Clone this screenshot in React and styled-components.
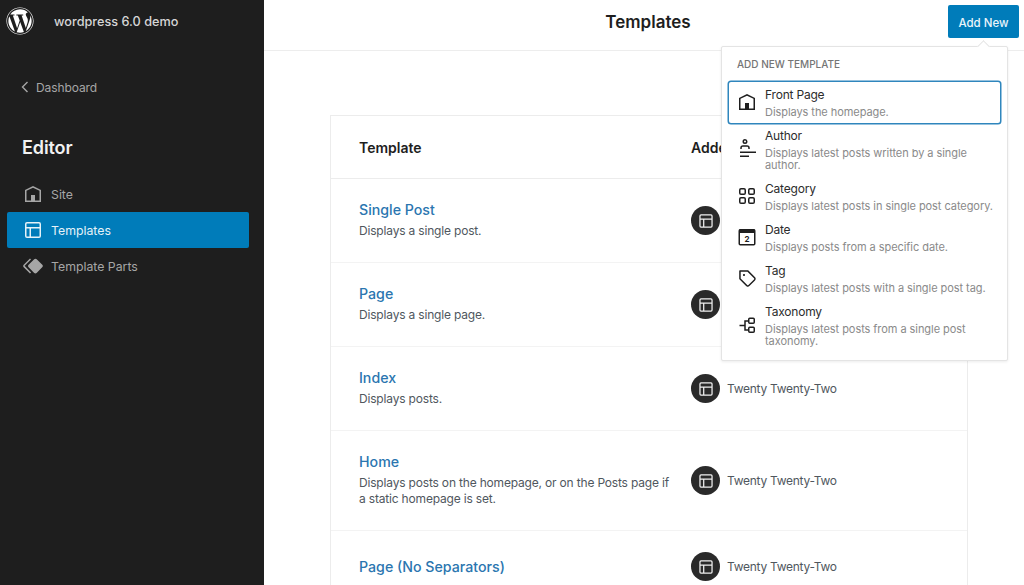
import React from "react";
import styled, { createGlobalStyle } from "styled-components";
import { FaWordpress } from "react-icons/fa";

const Global = createGlobalStyle`
  html, body { margin: 0; padding: 0; background: #fff; }
  body { font-family: Inter, "Liberation Sans", sans-serif; overflow: hidden; }
  #root { height: 585px; }
`;

const Shell = styled.div`
  display: flex;
  width: 1024px;
  height: 585px;
  overflow: hidden;
`;

const Sidebar = styled.aside`
  flex: 0 0 264px;
  background: #1e1e1e;
  display: flex;
  flex-direction: column;
`;

const SiteBar = styled.div`
  display: flex;
  align-items: center;
  gap: 20px;
  height: 42px;
  padding-left: 6px;
  color: #fff;
  font-size: 28px;
  line-height: 0;
`;

const SiteName = styled.span`
  font-size: 12.7px;
  line-height: 16px;
  font-weight: 500;
  margin-top: 2px;
  color: #d6d6d6;
`;

const BackLink = styled.div`
  display: flex;
  align-items: center;
  gap: 7px;
  height: 20px;
  margin: 35px 0 0 21px;
  font-size: 12px;
  letter-spacing: -0.1px;
  color: #a6a6a6;
`;

const SideTitle = styled.h2`
  margin: 39px 0 0 22px;
  height: 24px;
  font-size: 18px;
  line-height: 24px;
  font-weight: 600;
  letter-spacing: -0.1px;
  color: #f2f2f2;
`;

const Nav = styled.nav`
  display: flex;
  flex-direction: column;
  margin: 16px 15px 0 7px;
`;

const NavItem = styled.div`
  display: flex;
  align-items: center;
  gap: 6px;
  height: 36px;
  padding-left: 14px;
  border-radius: 2px;
  font-size: 12.3px;
  background: ${(p) => (p.$active ? "#007cba" : "transparent")};
  color: ${(p) => (p.$active ? "#e6f2f8" : "#a6a6a6")};
`;

const Main = styled.main`
  flex: 1;
  min-width: 0;
  display: flex;
  flex-direction: column;
  position: relative;
`;

const TopBar = styled.header`
  flex: 0 0 50px;
  box-sizing: content-box;
  display: flex;
  align-items: center;
  padding: 0 5px 0 84px;
  border-bottom: 1px solid #ededed;
`;

const PageTitle = styled.h1`
  flex: 1;
  margin: -6px 0 0;
  text-align: center;
  font-size: 17px;
  font-weight: 600;
  color: #1e1e1e;
`;

const PrimaryButton = styled.button`
  width: 71px;
  height: 33px;
  margin-top: -7px;
  padding: 2px 0 0;
  border: 0;
  border-radius: 2px;
  background: #007cba;
  color: #eaf4fa;
  font: 500 11.5px Inter, "Liberation Sans", sans-serif;
`;

const Table = styled.section`
  width: 638px;
  margin: 64px 0 0 66px;
  border: 1px solid #ececec;
  border-bottom: 0;
  box-sizing: border-box;
  flex: 1;
`;

const HeadRow = styled.div`
  display: grid;
  grid-template-columns: 332px 1fr;
  align-items: center;
  height: 63px;
  padding-left: 28px;
  border-bottom: 1px solid #ececec;
  font-size: 14px;
  font-weight: 600;
  color: #1e1e1e;
  box-sizing: border-box;
  white-space: nowrap;
  overflow: hidden;
`;

const Row = styled.div`
  display: grid;
  grid-template-columns: 312px 1fr;
  align-items: center;
  column-gap: 20px;
  padding: 21px 0 21px 28px;
  border-bottom: 1px solid #f3f3f3;
  box-sizing: border-box;
`;

const RowTitle = styled.div`
  font-size: 14.2px;
  line-height: 20px;
  font-weight: 500;
  color: #2b76b0;
`;

const RowDesc = styled.div`
  margin: 3px 0 2px;
  font-size: 12px;
  line-height: 16px;
  letter-spacing: -0.18px;
  color: #50575e;
`;

const Owner = styled.div`
  display: flex;
  align-items: center;
  gap: 7px;
  font-size: 12px;
  letter-spacing: -0.28px;
  color: #50575e;
`;

const Badge = styled.span`
  flex: 0 0 29px;
  width: 29px;
  height: 29px;
  border-radius: 50%;
  background: #2a2a2a;
  color: #f0f0f0;
  display: flex;
  align-items: center;
  justify-content: center;
`;

const Popover = styled.div`
  position: absolute;
  top: 46px;
  left: 457px;
  width: 287px;
  box-sizing: border-box;
  padding: 9px 7px 8px;
  background: #fff;
  border: 1px solid #e4e4e4;
  border-radius: 2px;
  box-shadow: 0 1px 3px rgba(0, 0, 0, 0.08);
  z-index: 2;

  &::before {
    content: "";
    position: absolute;
    top: -5px;
    right: 19px;
    width: 8px;
    height: 8px;
    background: #fff;
    border-top: 1px solid #e4e4e4;
    border-left: 1px solid #e4e4e4;
    transform: rotate(45deg);
  }
`;

const PopoverHeading = styled.div`
  height: 16px;
  margin: 0 0 10px 8px;
  font-size: 10px;
  line-height: 16px;
  font-weight: 500;
  text-transform: uppercase;
  color: #757575;
`;

const Option = styled.div`
  display: flex;
  align-items: center;
  gap: 6px;
  padding: 4px 4px 5px 6px;
  border-radius: 2px;
  color: #1e1e1e;
  ${(p) => p.$focused && "box-shadow: 0 0 0 1.5px #2f86bd;"}
`;

const OptionText = styled.div`
  flex: 1;
  min-width: 0;
`;

const OptionTitle = styled.div`
  font-size: 12px;
  line-height: 18px;
  letter-spacing: -0.2px;
  color: #2c2c2c;
`;

const OptionDesc = styled.div`
  margin-top: 2px;
  font-size: 11px;
  line-height: 12px;
  letter-spacing: -0.06px;
  color: #8a8a8a;
`;

const Icon = ({ size = 24, children }) => (
  <svg width={size} height={size} viewBox="0 0 24 24" fill="currentColor" style={{ flex: "none", display: "block" }}>
    {children}
  </svg>
);

const HomeIcon = () => (
  <Icon><path d="M12 4L4 7.9V20h16V7.9L12 4zm6.5 14.5H14V13h-4v5.5H5.5V8.8L12 5.7l6.5 3.1v9.7z" /></Icon>
);
const LayoutIcon = ({ size }) => (
  <Icon size={size}><path d="M18 5.5H6a.5.5 0 00-.5.5v3h13V6a.5.5 0 00-.5-.5zm.5 5H10v8h8a.5.5 0 00.5-.5v-7.5zm-10 0h-3V18a.5.5 0 00.5.5h2.5v-8zM6 4h12a2 2 0 012 2v12a2 2 0 01-2 2H6a2 2 0 01-2-2V6a2 2 0 012-2z" /></Icon>
);
const PartsIcon = () => (
  <Icon><path d="M21.3 10.8l-5.6-5.6c-.7-.7-1.8-.7-2.5 0l-5.6 5.6c-.7.7-.7 1.8 0 2.5l5.6 5.6c.3.3.8.5 1.2.5s.9-.2 1.2-.5l5.6-5.6c.8-.7.8-1.9.1-2.5zm-17.6 1L10 5.5l-1-1-6.3 6.3c-.7.7-.7 1.8 0 2.5L9 19.5l1.1-1.1-6.3-6.3c-.2 0-.2-.2-.1-.3z" /></Icon>
);
const AuthorIcon = () => (
  <Icon><path fillRule="evenodd" d="M10 4.5a1 1 0 11-2 0 1 1 0 012 0zm1.5 0a2.5 2.5 0 11-5 0 2.5 2.5 0 015 0zm2.25 7.5v-1A2.75 2.75 0 0011 8.25H7A2.75 2.75 0 004.25 11v1h1.5v-1c0-.69.56-1.25 1.25-1.25h4c.69 0 1.25.56 1.25 1.25v1h1.5zM4 20h9v-1.5H4V20zm16-4H4v-1.5h16V16z" transform="translate(1 0)" /></Icon>
);
const CategoryIcon = () => (
  <Icon>
    <g fill="none" stroke="currentColor" strokeWidth="1.5">
      <rect x="4.75" y="4.75" width="5.5" height="5.5" rx="1.25" />
      <rect x="13.75" y="4.75" width="5.5" height="5.5" rx="1.25" />
      <rect x="4.75" y="13.75" width="5.5" height="5.5" rx="1.25" />
      <rect x="13.75" y="13.75" width="5.5" height="5.5" rx="1.25" />
    </g>
  </Icon>
);
const DateIcon = () => (
  <Icon>
    <rect x="4.25" y="4.75" width="15.5" height="15" rx="1" fill="none" stroke="currentColor" strokeWidth="1.5" />
    <rect x="4" y="4.5" width="16" height="3.5" />
    <text x="12" y="16.8" textAnchor="middle" fontSize="8" fontWeight="700" fontFamily="Inter, sans-serif">2</text>
  </Icon>
);
const TagIcon = () => (
  <Icon><path d="M20.1 11.2l-6.7-6.7c-.1-.1-.3-.2-.5-.2H5c-.4-.1-.8.3-.8.7v7.8c0 .2.1.4.2.5l6.7 6.7c.2.2.5.4.7.5s.6.2.9.2c.3 0 .6-.1.9-.2.3-.1.5-.3.8-.5l5.6-5.6c.4-.4.7-1 .7-1.6.1-.6-.2-1.2-.6-1.6zM19 13.4L13.4 19c-.1.1-.2.1-.3.2-.2.1-.4.1-.6 0-.1 0-.2-.1-.3-.2l-6.5-6.5V5.8h6.8l6.5 6.5c.2.2.2.4.2.6 0 .1 0 .3-.2.5zM9 8c-.6 0-1 .4-1 1s.4 1 1 1 1-.4 1-1-.4-1-1-1z" /></Icon>
);
const TaxonomyIcon = () => (
  <Icon>
    <g fill="none" stroke="currentColor" strokeWidth="1.5">
      <rect x="13.75" y="5.25" width="5.5" height="5" rx="1" />
      <rect x="13.75" y="14.25" width="5.5" height="5" rx="1" />
      <path d="M4.5 12.5H10M13.75 8H10v9h3.75" />
    </g>
  </Icon>
);

const BackChevron = () => (
  <svg width="8" height="12" viewBox="0 0 8 12" fill="none" stroke="currentColor" strokeWidth="1.4" style={{ flex: "none" }}>
    <path d="M6.5 1L1.5 6l5 5" />
  </svg>
);

const rows = [
  { title: "Single Post", desc: "Displays a single post." },
  { title: "Page", desc: "Displays a single page." },
  { title: "Index", desc: "Displays posts." },
  { title: "Home", desc: "Displays posts on the homepage, or on the Posts page if a static homepage is set." },
  { title: "Page (No Separators)" },
];

const options = [
  { icon: <HomeIcon />, title: "Front Page", desc: "Displays the homepage.", focused: true },
  { icon: <AuthorIcon />, title: "Author", desc: "Displays latest posts written by a single author." },
  { icon: <CategoryIcon />, title: "Category", desc: "Displays latest posts in single post category." },
  { icon: <DateIcon />, title: "Date", desc: "Displays posts from a specific date." },
  { icon: <TagIcon />, title: "Tag", desc: "Displays latest posts with a single post tag." },
  { icon: <TaxonomyIcon />, title: "Taxonomy", desc: "Displays latest posts from a single post taxonomy." },
];

export default function App() {
  return (
    <>
      <Global />
      <Shell>
        <Sidebar>
          <SiteBar>
            <FaWordpress />
            <SiteName>wordpress 6.0 demo</SiteName>
          </SiteBar>
          <BackLink>
            <BackChevron />
            Dashboard
          </BackLink>
          <SideTitle>Editor</SideTitle>
          <Nav>
            <NavItem><HomeIcon />Site</NavItem>
            <NavItem $active><LayoutIcon />Templates</NavItem>
            <NavItem><PartsIcon />Template Parts</NavItem>
          </Nav>
        </Sidebar>
        <Main>
          <TopBar>
            <PageTitle>Templates</PageTitle>
            <PrimaryButton>Add New</PrimaryButton>
          </TopBar>
          <Table>
            <HeadRow>
              <span>Template</span>
              <span>Added by</span>
            </HeadRow>
            {rows.map((r) => (
              <Row key={r.title}>
                <div>
                  <RowTitle>{r.title}</RowTitle>
                  {r.desc && <RowDesc>{r.desc}</RowDesc>}
                </div>
                <Owner>
                  <Badge><LayoutIcon size={20} /></Badge>
                  Twenty Twenty-Two
                </Owner>
              </Row>
            ))}
          </Table>
          <Popover>
            <PopoverHeading>Add new template</PopoverHeading>
            {options.map((o) => (
              <Option key={o.title} $focused={o.focused}>
                {o.icon}
                <OptionText>
                  <OptionTitle>{o.title}</OptionTitle>
                  <OptionDesc>{o.desc}</OptionDesc>
                </OptionText>
              </Option>
            ))}
          </Popover>
        </Main>
      </Shell>
    </>
  );
}
